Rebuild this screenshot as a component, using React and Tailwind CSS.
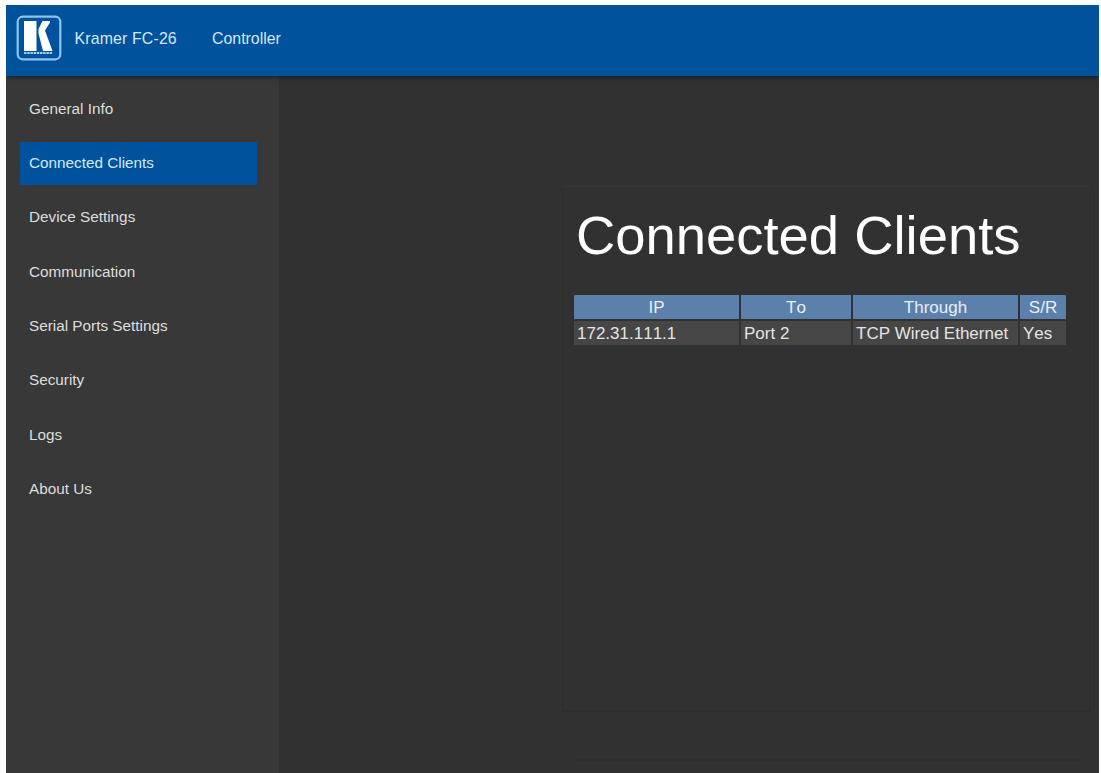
const MENU = [
  "General Info",
  "Connected Clients",
  "Device Settings",
  "Communication",
  "Serial Ports Settings",
  "Security",
  "Logs",
  "About Us",
];

const COLUMNS = ["IP", "To", "Through", "S/R"];
const CLIENTS = [["172.31.111.1", "Port 2", "TCP Wired Ethernet", "Yes"]];

function Logo() {
  return (
    <svg className="h-[46px] w-[46px] shrink-0" viewBox="0 0 46 46" fill="none">
      <rect x="1.7" y="1.7" width="42.6" height="42.6" rx="5" stroke="#8fc4f0" strokeWidth="2.2" />
      <path d="M8 6h12.500v30H8z" fill="#fff" />
      <path d="M34 6v1.500L29 15.500 36.500 36H27L22.500 18.500V14L26.500 6z" fill="#fff" />
      <path d="M8 38h28.500" stroke="#a9cdee" strokeWidth="2" strokeDasharray="2.500 .7" />
    </svg>
  );
}

function Header() {
  return (
    <header className="relative flex h-[71px] shrink-0 items-start bg-[#00529c] pl-[10px] pt-[10px] text-[15.9px] text-[#d3e8fa] shadow-[0_1px_5px_rgba(0,20,40,0.75)]">
      <Logo />
      <span className="ml-[12.5px] mt-[12px] w-[137.5px] whitespace-nowrap leading-[24px] tracking-[0.14px]">Kramer FC-26</span>
      <span className="mt-[12px] whitespace-nowrap leading-[24px]">Controller</span>
    </header>
  );
}

function Sidebar() {
  return (
    <nav className="flex w-[273px] shrink-0 flex-col gap-[10.8px] bg-[#383838] pl-[14px] pr-[22px] pt-[11.5px]">
      {MENU.map((item) => (
        <a
          key={item}
          className={
            item === "Connected Clients"
              ? "flex h-[43.5px] items-center whitespace-nowrap bg-[#00529c] pl-[9px] text-[15.3px] text-[#d3e8fa]"
              : "flex h-[43.5px] items-center whitespace-nowrap pl-[9px] text-[15.3px] text-[#dedede]"
          }
        >
          {item}
        </a>
      ))}
    </nav>
  );
}

function ClientsTable() {
  return (
    <div className="mt-[29px] grid w-[492px] grid-cols-[165px_110px_165px_46px] gap-x-[2px] gap-y-[2px] text-[17px] [font-kerning:none]">
      {COLUMNS.map((name) => (
        <div key={name} className="flex h-[24px] items-center justify-center bg-[#5b80ab] pt-[2px] text-[#e6effa]">
          {name}
        </div>
      ))}
      {CLIENTS.flat().map((value) => (
        <div key={value} className="flex h-[24px] items-center whitespace-nowrap bg-[#464646] pl-[3px] pt-[2px] text-[#e4e4e4]">
          {value}
        </div>
      ))}
    </div>
  );
}

export default function App() {
  return (
    <div className="h-[773px] w-[1101px] overflow-hidden bg-white pl-[6px] pr-[2px] pt-[5px] font-['Liberation_Sans',Arial,sans-serif]">
      <div className="flex h-full flex-col overflow-hidden bg-[#313131]">
        <Header />
        <div className="flex min-h-0 flex-1">
          <Sidebar />
          <main className="flex flex-1 flex-col pl-[283px] pr-[8px] pt-[110px]">
            <section className="h-[526px] border border-b-2 border-[#2d2d2d] border-t-[#363636] pl-[11px] pt-[19px] shadow-[0_0_3px_#363636]">
              <h1 className="ml-[2px] whitespace-nowrap text-[54.400px] leading-[60px] text-white">Connected Clients</h1>
              <ClientsTable />
            </section>
            <div className="mx-[10px] h-[49px] border-b-2 border-[#2e2e2e]" />
          </main>
        </div>
      </div>
    </div>
  );
}
